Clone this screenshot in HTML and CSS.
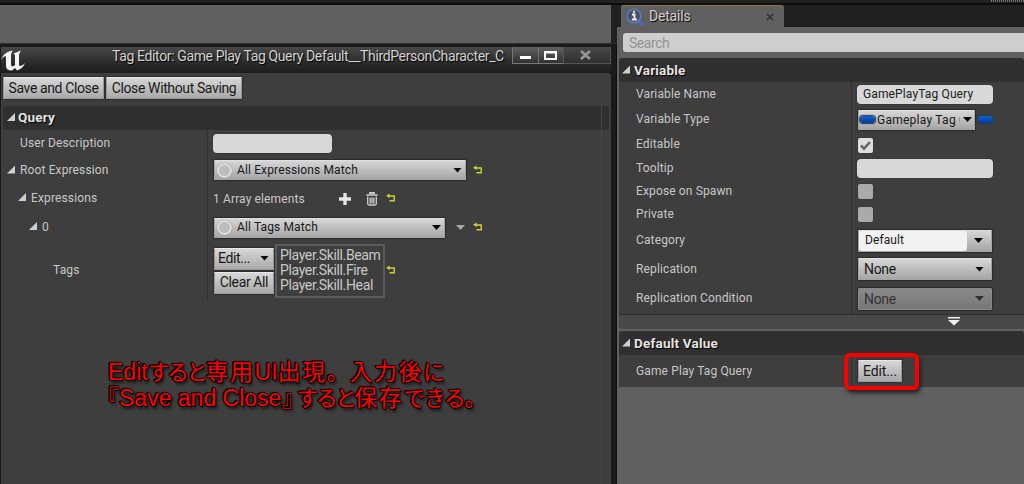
FILE: index.html
```
<!DOCTYPE html>
<html lang="ja">
<head>
  <meta charset="UTF-8">
  <title>Tag Editor</title>
  <link rel="stylesheet" href="styles.css">
</head>
<body>
  <svg width="0" height="0" class="defs">
    <defs>
      <symbol id="reset" viewBox="0 0 10 10">
        <path d="M2 3h6.200v4.700H3.500" fill="none" stroke="#ced235" stroke-width="1.400"/>
        <path d="M0 2.800L3.600 0.600v4.400z" fill="#ced235"/>
      </symbol>
    </defs>
  </svg>

  <div class="topbar"><span class="grip"></span></div>
  <div class="main">
    <div class="left">
      <div class="backdrop"></div>
      <div class="window">
        <div class="titlebar">
          <svg class="logo" width="26" height="24" viewBox="0 0 26 24">
            <path d="M0 11C2 5 6 2.500 12 1.500C10.500 3 10 5 10 7V15.500C10 17.500 12 18 14 16V6L12.500 4.500L20 1.500C18.500 4 18 5 18 7V15.500C18 17.500 20 18 24 14C22.500 18 20 20 16 21.500L14 19L11 21.500C7 21.500 5 20 5 17V8.500C5 6 2 7.500 0 11Z" fill="#f4f4f4"/>
          </svg>
          <span class="title">Tag Editor: Game Play Tag Query Default__ThirdPersonCharacter_C</span>
          <div class="win-buttons">
            <span class="win-btn"><svg width="25" height="16"><path d="M7 9h11v3H7z" fill="#fff"/></svg></span>
            <span class="win-btn"><svg width="24" height="16"><rect x="6" y="5" width="11" height="7" fill="none" stroke="#fff" stroke-width="2"/><path d="M5 5.500h13" stroke="#fff" stroke-width="2"/></svg></span>
            <span class="win-btn close"><svg width="46" height="16"><path d="M17 4l9 8M26 4l-9 8" stroke="#969696" stroke-width="2.600"/></svg></span>
          </div>
        </div>
        <div class="client">
          <div class="actions">
            <button class="btn save">Save and Close</button>
            <button class="btn nosave">Close Without Saving</button>
          </div>
          <div class="section query-head"><i class="tri"></i><span>Query</span></div>
          <div class="tree">
            <div class="row r-desc">
              <div class="name n1">User Description</div>
              <div class="value"><span class="input desc"></span></div>
            </div>
            <div class="row r-root">
              <div class="name n0"><i class="tri"></i><span>Root Expression</span></div>
              <div class="value">
                <div class="combo root"><i class="ring"></i><span>All Expressions Match</span><i class="arrow"></i></div>
                <svg class="reset" width="10" height="10"><use href="#reset"/></svg>
              </div>
            </div>
            <div class="row r-exp">
              <div class="name n2"><i class="tri"></i><span>Expressions</span></div>
              <div class="value">
                <span class="count">1 Array elements</span>
                <svg width="12" height="12"><path d="M6 0v12M0 6h12" stroke="#e6e6e6" stroke-width="3.400"/></svg>
                <svg class="trash" width="12" height="14" viewBox="0 0 12 14">
                  <path d="M4 2V.8h4V2M0.300 3h11.400" fill="none" stroke="#cfcfcf" stroke-width="1.700"/>
                  <path d="M1.700 4.500V11.500Q1.700 13 3 13H9Q10.300 13 10.300 11.500V4.500M4.200 5.500v6M6 5.500v6M7.800 5.500v6" fill="none" stroke="#cfcfcf" stroke-width="1.300"/>
                </svg>
                <svg class="reset" width="10" height="10"><use href="#reset"/></svg>
              </div>
            </div>
            <div class="row r-zero">
              <div class="name n3"><i class="tri"></i><span>0</span></div>
              <div class="value">
                <div class="combo zero"><i class="ring"></i><span>All Tags Match</span><i class="arrow"></i></div>
                <i class="arrow pale"></i>
                <svg class="reset" width="10" height="10"><use href="#reset"/></svg>
              </div>
            </div>
            <div class="row r-tags">
              <div class="name n4">Tags</div>
              <div class="value">
                <div class="tag-buttons">
                  <button class="btn edit">Edit...<i class="arrow"></i></button>
                  <button class="btn clear">Clear All</button>
                </div>
                <div class="tag-list">
                  <div>Player.Skill.Beam</div>
                  <div>Player.Skill.Fire</div>
                  <div>Player.Skill.Heal</div>
                </div>
                <svg class="reset" width="10" height="10"><use href="#reset"/></svg>
              </div>
            </div>
          </div>
          <div class="note">
            <div class="note-line">Edit<span class="kana">すると</span><span class="kanji">専用</span>UI<span class="kanji">出現</span>。<span class="kanji">入力後</span><span class="kana">に</span></div>
            <div class="note-line"><span class="open">『</span>Save and Close<span class="shut">』</span><span class="kana">すると</span><span class="kanji">保存</span><span class="kana wide">できる</span>。</div>
          </div>
          <i class="scroll-line"></i>
        </div>
      </div>
    </div>

    <div class="right">
      <div class="tabs">
        <div class="tab">
          <svg width="18" height="18" viewBox="0 0 18 18">
            <path d="M12 13l5 4" stroke="#4a6cd0" stroke-width="2.500"/>
            <circle cx="8" cy="8" r="6.800" fill="#4a5061" stroke="#5b7bce" stroke-width="1.500"/>
            <path d="M6 6.500h2.500V11M5.800 11.500h5M7 3.800h2" fill="none" stroke="#f0f0f0" stroke-width="1.800"/>
          </svg>
          <span class="tab-title">Details</span>
          <svg class="tab-close" width="8" height="8"><path d="M1 1l6 6M7 1L1 7" stroke="#303030" stroke-width="1.500"/></svg>
        </div>
      </div>
      <div class="details">
        <div class="search">Search</div>
        <div class="section"><i class="tri"></i><span>Variable</span></div>
        <div class="props">
          <div class="row p25"><div class="name">Variable Name</div><div class="value"><span class="input vname">GamePlayTag Query</span></div></div>
          <div class="row p25"><div class="name">Variable Type</div><div class="value">
            <div class="combo vtype"><i class="pill"></i><span class="clip">Gameplay Tag Query</span><i class="arrow"></i></div><i class="pill outer"></i></div></div>
          <div class="row p24"><div class="name">Editable</div><div class="value"><span class="check on"><svg width="15" height="15"><path d="M3 7.500l3 3.200L12 4" fill="none" stroke="#666" stroke-width="2.600"/></svg></span></div></div>
          <div class="row p24"><div class="name">Tooltip</div><div class="value"><span class="input vname"></span></div></div>
          <div class="row p23"><div class="name">Expose on Spawn</div><div class="value"><span class="check"></span></div></div>
          <div class="row p23"><div class="name">Private</div><div class="value"><span class="check"></span></div></div>
          <div class="row p29"><div class="name">Category</div><div class="value"><div class="combo big cat"><span class="cat-text">Default</span><i class="arrow"></i></div></div></div>
          <div class="row p28"><div class="name">Replication</div><div class="value"><div class="combo big"><span>None</span><i class="arrow"></i></div></div></div>
          <div class="row p31"><div class="name">Replication Condition</div><div class="value"><div class="combo big disabled"><span>None</span><i class="arrow"></i></div></div></div>
        </div>
        <div class="expander"><svg width="12" height="9"><path d="M0 0h12v1.500H0zM0 3h12L6 8.500z" fill="#eee"/></svg></div>
        <div class="section second"><i class="tri"></i><span>Default Value</span></div>
        <div class="props">
          <div class="row p32"><div class="name">Game Play Tag Query</div><div class="value"><button class="btn edit2">Edit...</button><i class="highlight"></i></div></div>
        </div>
      </div>
    </div>
  </div>
</body>
</html>
```
FILE: styles.css
```
* { box-sizing: border-box; }
body {
  margin: 0;
  width: 1024px;
  height: 484px;
  overflow: hidden;
  background: #202020;
  color: #c8c8c8;
  font-family: Roboto, "Noto Sans CJK JP", sans-serif;
  font-size: 12px;
  letter-spacing: 0.13px;
}
.defs { position: absolute; }
svg { display: block; flex: none; }
i { display: block; flex: none; }
.topbar {
  height: 5px;
  background: #202020;
  border-bottom: 2px solid #0c0c0c;
}
.grip {
  display: block;
  width: 33px;
  height: 2px;
  margin-left: auto;
  background: repeating-linear-gradient(90deg, #777 0 1px, #222 1px 2px);
}
.main { display: flex; height: 479px; }

/* tag editor window */
.left { width: 617px; }
.backdrop { width: 611px; height: 38px; background: #606060; }
.window {
  height: 441px;
  padding: 3px 5px 0 1px;
  background: #1a1a1a;
  border-right: 1px solid #101010;
  border-top: 1px solid #303030;
}
.titlebar {
  display: flex;
  height: 26px;
  background: linear-gradient(#484848, #2b2b2b 60%, #1d1d1d);
}
.logo { margin-top: 2px; }
.title {
  width: 400px;
  margin-left: 85px;
  font-size: 14px;
  line-height: 19px;
  letter-spacing: -0.37px;
  white-space: nowrap;
  color: #d2d2d2;
  text-shadow: 1px 1px 1px #000;
}
.win-buttons { display: flex; height: 17px; }
.win-btn {
  border: 1px solid #777;
  border-top: 0;
  margin-right: -1px;
  background: linear-gradient(#606060, #323232);
}
.win-btn.close { background: linear-gradient(#484848, #303030); border-color: #555; }
.client {
  position: relative;
  height: 411px;
  padding: 4px 2px 0;
  background: #3e3e3e;
  border-radius: 0 3px 0 0;
}
.actions { display: flex; gap: 2px; height: 29px; }
.btn {
  height: 22px;
  padding: 0 0 1px;
  border: 1px solid #999;
  border-top-color: #e8e8e8;
  border-radius: 1px;
  background: linear-gradient(#d6d6d6, #a9a9a9);
  box-shadow: 0 0 1px 1px #303030;
  color: #191919;
  font-family: Roboto, sans-serif;
  font-size: 14px;
  letter-spacing: -0.38px;
  white-space: nowrap;
}
.save { width: 101px; }
.nosave { width: 136px; }
.section {
  display: flex;
  align-items: center;
  height: 24px;
  padding: 0 0 2px 4px;
  background: #303030;
  color: #e4e4e4;
  font-size: 13.5px;
  font-weight: 700;
  letter-spacing: 0.2px;
  text-shadow: 1px 1px 1px #000;
  border-radius: 3px 3px 0 0;
}
.tri {
  width: 8px;
  height: 8px;
  margin-right: 4px;
  background: #cfcfcf;
  clip-path: polygon(100% 0, 100% 100%, 0 100%);
}
.query-head .tri { margin-right: 3px; }
.tree { background: linear-gradient(90deg, transparent 204px, #303030 204px 205px, transparent 205px); }
.row { display: flex; align-items: center; }
.r-desc { height: 27px; }
.r-root { height: 26px; }
.r-exp { height: 31px; }
.r-zero { height: 27px; }
.r-tags { height: 59px; }
.name { display: flex; align-items: center; flex: none; white-space: nowrap; }
.tree .name { width: 210px; padding-bottom: 1px; }
.n0 { padding-left: 4px; }
.n0 .tri { margin-right: 5px; }
.n1 { padding-left: 17px; }
.n2 { padding-left: 15px; }
.n2 .tri, .n3 .tri { margin-right: 5px; margin-top: -2px; }
.n3 { padding-left: 26px; }
.n4 { padding-left: 50px; }
.value { position: relative; display: flex; align-items: center; }
.input {
  display: block;
  height: 19px;
  line-height: 19px;
  padding-left: 6px;
  border-radius: 4px;
  background: #d8d8d8;
  box-shadow: 0 0 1px #202020;
  color: #202020;
}
.desc { width: 119px; }
.combo {
  display: flex;
  align-items: center;
  height: 20px;
  border: 1px solid #a4a4a4;
  border-top-color: #e0e0e0;
  background: linear-gradient(#d6d6d6, #a6a6a6);
  box-shadow: 0 0 1px 1px #2b2b2b;
  border-radius: 1px;
  color: #191919;
  white-space: nowrap;
}
.combo, .tag-buttons { margin-left: 1px; }
.root { width: 252px; }
.zero { width: 231px; }
.root span, .zero span { padding-bottom: 1px; }
.ring {
  width: 15px;
  height: 15px;
  margin: 0 5px 0 2px;
  border: 2px solid #dedede;
  border-radius: 50%;
  background: #bdbdbd;
  box-shadow: 0 0 1px #777;
}
.arrow {
  width: 9px;
  height: 5px;
  margin-left: auto;
  margin-right: 3px;
  background: #080808;
  clip-path: polygon(0 0, 100% 0, 50% 100%);
}
.arrow.pale { background: #aaa; margin: 0 8px 0 11px; }
.reset { margin-top: -1px; }
.r-root .reset { margin-left: 7px; }
.count { width: 126px; }
.trash { margin: 0 8px 0 15px; }
.btn.edit { display: flex; align-items: center; width: 60px; padding-left: 3px; }
.btn.clear { display: block; width: 60px; margin-top: 2px; }
.edit .arrow { margin-right: 4px; }
.tag-list {
  width: 110px;
  height: 54px;
  margin: 0 1px;
  padding: 2px 0 0 3px;
  border: 2px solid #5c5c5c;
  font-size: 14px;
  line-height: 15.300px;
  letter-spacing: -0.36px;
}
.note {
  margin: 59px 0 0 105px;
  color: #f00;
  font: 23px/26px "Liberation Sans", "Noto Sans CJK JP", sans-serif;
  letter-spacing: 0;
  white-space: nowrap;
  text-shadow: 1px 0 #000, -1px 0 #000, 0 1px #000, 0 -1px #000, 1px 1px 1px #000, -1px -1px 1px #000, 2px 3px 3px #111;
}
.note-line { height: 26px; }
.kana { font-size: 22px; letter-spacing: -2.7px; }
.kana.wide { letter-spacing: -1.5px; }
.kanji { letter-spacing: 1.5px; }
.open { margin-left: -12px; }
.shut { margin-right: -8px; }
.scroll-line {
  position: absolute;
  top: 33px;
  right: 9px;
  width: 1px;
  height: 378px;
  background: #484848;
}

/* details panel */
.right { width: 407px; }
.tabs { height: 22px; padding-left: 4px; }
.tab {
  display: flex;
  align-items: center;
  width: 163px;
  height: 22px;
  padding: 0 10px 0 5px;
  background: #606060;
  border-top: 1px solid #8b7b26;
  border-radius: 3px 3px 0 0;
}
.tab-title {
  margin: -2px 0 0 5px;
  font-size: 14px;
  letter-spacing: -0.2px;
  color: #d0d0d0;
  text-shadow: 1px 1px 1px #000;
}
.tab-close { margin-left: auto; }
.details {
  height: 457px;
  padding: 6px 0 0 2px;
  background: #606060;
}
.search {
  height: 19px;
  margin: 0 0 6px 4px;
  padding-left: 6px;
  background: #cecece;
  border-radius: 3px 0 0 3px;
  color: #939393;
  font-size: 14px;
  line-height: 20px;
  letter-spacing: -0.45px;
}
.details .section { padding: 0 0 1px 3px; }
.props { background: linear-gradient(90deg, #3e3e3e 232px, #303030 232px 233px, #3e3e3e 233px); }
.props .name { width: 238px; padding: 0 0 1px 17px; }
.p23 { height: 23px; }
.p24 { height: 24px; }
.p25 { height: 25px; }
.p28 { height: 28px; }
.p29 { height: 29px; }
.p31 { height: 31px; }
.p32 { height: 32px; }
.vname { width: 136px; }
.vtype { width: 117px; }
.clip { width: 83px; margin-left: 2px; overflow: hidden; letter-spacing: 0.25px; }
.vtype .arrow { margin: 0 auto 0 3px; }
.pill {
  width: 15px;
  height: 7px;
  margin-left: 1px;
  border-radius: 3px;
  background: linear-gradient(#1261cf, #033b98);
  box-shadow: 0 0 1px 1px #283a58;
}
.outer { margin-left: 3px; }
.check {
  width: 15px;
  height: 15px;
  margin-left: 1px;
  border-radius: 2px;
  background: #aaa;
  box-shadow: 0 0 1px #222;
}
.check.on { margin-top: 2px; background: #dedede; }
.big { width: 134px; height: 22px; font-size: 14px; letter-spacing: -0.3px; padding-left: 5px; }
.big .arrow { margin-right: 7px; }
.cat { padding-left: 0; font-size: 12px; letter-spacing: 0.1px; }
.cat .arrow { margin-right: 8px; }
.cat-text {
  width: 108px;
  height: 20px;
  padding-left: 6px;
  background: #f2f2f2;
  border-radius: 3px;
  line-height: 19px;
}
.disabled { background: linear-gradient(#898989, #777); border-color: #888; color: #343434; }
.disabled .arrow { background: #303030; }
.expander {
  display: flex;
  height: 15px;
  padding: 2px 0 0 329px;
  background: #484848;
  border-top: 1px solid #2d2d2d;
  border-radius: 0 0 0 3px;
}
.second { margin-top: 2px; }
.edit2 { width: 44px; margin-left: 1px; letter-spacing: -0.1px; }
.highlight {
  position: absolute;
  left: -13px;
  top: -7px;
  width: 75px;
  height: 37px;
  border: 4px solid #f80000;
  border-radius: 6px;
  box-shadow: 2px 3px 4px #222;
}
```
